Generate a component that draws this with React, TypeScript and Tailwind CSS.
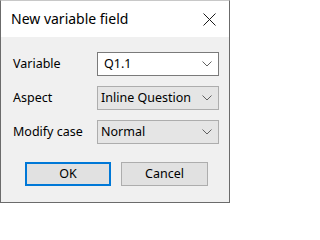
const font = "font-['Segoe_UI','Noto_Sans','Liberation_Sans',sans-serif]";

function Chevron() {
  return (
    <svg width="10" height="6" viewBox="0 0 10 6" className="shrink-0">
      <path d="M0.5 0.5 L5 5 L9.5 0.5" fill="none" stroke="#606060" strokeWidth="1" />
    </svg>
  );
}

function Combo({ value, editable }: { value: string; editable?: boolean }) {
  return (
    <div
      className={
        editable
          ? "flex h-[24px] w-[122px] items-center justify-between border border-[#7a7a7a] bg-white pl-[6px] pr-[6px]"
          : "flex h-[24px] w-[122px] items-center justify-between border border-[#adadad] bg-[#e5e5e5] pl-[3px] pr-[6px]"
      }
    >
      <span className="whitespace-nowrap text-[12.5px] leading-none text-black">{value}</span>
      <Chevron />
    </div>
  );
}

export default function App() {
  return (
    <div className={`h-[203px] w-[231px] bg-white ${font}`}>
      <div className="flex h-[203px] w-[230px] flex-col border border-[#6b6b6b] border-t-[#c8c8c8] bg-[#f0f0f0]">
        <div className="flex h-[36px] items-center justify-between bg-white pl-[10px] pr-[13px]">
          <span className="text-[14px] leading-none text-black">New variable field</span>
          <svg width="13" height="13" viewBox="0 0 13 13">
            <path d="M0.5 0.5 L12.5 12.5 M12.5 0.5 L0.5 12.5" stroke="#1a1a1a" strokeWidth="1" />
          </svg>
        </div>

        <div className="grid grid-cols-[84px_122px] gap-y-[10px] pl-[12px] pt-[15px]">
          <span className="flex items-center text-[12.5px] text-black">Variable</span>
          <Combo value="Q1.1" editable />
          <span className="flex items-center text-[12.5px] text-black">Aspect</span>
          <Combo value="Inline Question" />
          <span className="flex items-center text-[12.5px] text-black">Modify case</span>
          <Combo value="Normal" />
        </div>

        <div className="flex gap-[10px] pl-[24px] pt-[18px]">
          <button className="flex h-[24px] w-[86px] items-center justify-center border-2 border-[#0078d7] bg-[#e1e1e1] text-[12.5px] text-black">
            OK
          </button>
          <button className="flex h-[24px] w-[87px] items-center justify-center border border-[#adadad] bg-[#e1e1e1] text-[12.5px] text-black">
            Cancel
          </button>
        </div>
      </div>
    </div>
  );
}
